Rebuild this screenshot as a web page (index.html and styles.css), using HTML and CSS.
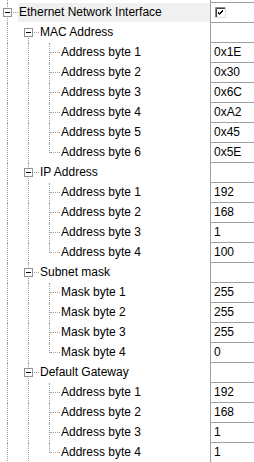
FILE: index.html
```html
<!DOCTYPE html>
<html lang="en">
<head>
    <meta charset="UTF-8">
    <title>Ethernet Network Interface</title>
    <link rel="stylesheet" href="styles.css">
</head>
<body>

    <div class="grid">
        <div class="row stub">
            <div class="name"><i class="g"></i></div>
            <div class="value"></div>
        </div>

        <div class="row">
            <div class="name"><i class="g t"><b class="box"></b></i><span class="label sel">Ethernet Network Interface</span></div>
            <div class="value">
                <svg class="check" width="11" height="11" viewBox="0 0 11 11">
                    <rect x="0" y="0" width="11" height="11" fill="#fff"/>
                    <path d="M0.5 11V0.5H11" fill="none" stroke="#8c8c8c"/>
                    <path d="M1.5 10V1.5H10" fill="none" stroke="#404040"/>
                    <path d="M0 10.5H10.5V0" fill="none" stroke="#e0e0e0"/>
                    <path d="M3 5L4.5 6.5L8 3M3 6L4.5 7.5L8 4" fill="none" stroke="#000"/>
                </svg>
            </div>
        </div>

        <!-- MAC -->
        <div class="row">
            <div class="name"><i class="g"></i><i class="g t first"><b class="box"></b></i><span class="label">MAC Address</span></div>
            <div class="value"></div>
        </div>
        <div class="row">
            <div class="name"><i class="g"></i><i class="g"></i><i class="g t"></i><span class="label">Address byte 1</span></div>
            <div class="value">0x1E</div>
        </div>
        <div class="row">
            <div class="name"><i class="g"></i><i class="g"></i><i class="g t"></i><span class="label">Address byte 2</span></div>
            <div class="value">0x30</div>
        </div>
        <div class="row">
            <div class="name"><i class="g"></i><i class="g"></i><i class="g t"></i><span class="label">Address byte 3</span></div>
            <div class="value">0x6C</div>
        </div>
        <div class="row">
            <div class="name"><i class="g"></i><i class="g"></i><i class="g t"></i><span class="label">Address byte 4</span></div>
            <div class="value">0xA2</div>
        </div>
        <div class="row">
            <div class="name"><i class="g"></i><i class="g"></i><i class="g t"></i><span class="label">Address byte 5</span></div>
            <div class="value">0x45</div>
        </div>
        <div class="row">
            <div class="name"><i class="g"></i><i class="g"></i><i class="g l"></i><span class="label">Address byte 6</span></div>
            <div class="value">0x5E</div>
        </div>

        <!-- IP -->
        <div class="row">
            <div class="name"><i class="g"></i><i class="g t"><b class="box"></b></i><span class="label">IP Address</span></div>
            <div class="value"></div>
        </div>
        <div class="row">
            <div class="name"><i class="g"></i><i class="g"></i><i class="g t"></i><span class="label">Address byte 1</span></div>
            <div class="value">192</div>
        </div>
        <div class="row">
            <div class="name"><i class="g"></i><i class="g"></i><i class="g t"></i><span class="label">Address byte 2</span></div>
            <div class="value">168</div>
        </div>
        <div class="row">
            <div class="name"><i class="g"></i><i class="g"></i><i class="g t"></i><span class="label">Address byte 3</span></div>
            <div class="value">1</div>
        </div>
        <div class="row">
            <div class="name"><i class="g"></i><i class="g"></i><i class="g l"></i><span class="label">Address byte 4</span></div>
            <div class="value">100</div>
        </div>

        <!-- Subnet -->
        <div class="row">
            <div class="name"><i class="g"></i><i class="g t"><b class="box"></b></i><span class="label">Subnet mask</span></div>
            <div class="value"></div>
        </div>
        <div class="row">
            <div class="name"><i class="g"></i><i class="g"></i><i class="g t"></i><span class="label">Mask byte 1</span></div>
            <div class="value">255</div>
        </div>
        <div class="row">
            <div class="name"><i class="g"></i><i class="g"></i><i class="g t"></i><span class="label">Mask byte 2</span></div>
            <div class="value">255</div>
        </div>
        <div class="row">
            <div class="name"><i class="g"></i><i class="g"></i><i class="g t"></i><span class="label">Mask byte 3</span></div>
            <div class="value">255</div>
        </div>
        <div class="row">
            <div class="name"><i class="g"></i><i class="g"></i><i class="g l"></i><span class="label">Mask byte 4</span></div>
            <div class="value">0</div>
        </div>

        <!-- Gateway -->
        <div class="row">
            <div class="name"><i class="g"></i><i class="g t"><b class="box"></b></i><span class="label">Default Gateway</span></div>
            <div class="value"></div>
        </div>
        <div class="row">
            <div class="name"><i class="g"></i><i class="g"></i><i class="g t"></i><span class="label">Address byte 1</span></div>
            <div class="value">192</div>
        </div>
        <div class="row">
            <div class="name"><i class="g"></i><i class="g"></i><i class="g t"></i><span class="label">Address byte 2</span></div>
            <div class="value">168</div>
        </div>
        <div class="row">
            <div class="name"><i class="g"></i><i class="g"></i><i class="g t"></i><span class="label">Address byte 3</span></div>
            <div class="value">1</div>
        </div>
        <div class="row">
            <div class="name"><i class="g"></i><i class="g"></i><i class="g l"></i><span class="label">Address byte 4</span></div>
            <div class="value">1</div>
        </div>
    </div>

</body>
</html>
```

FILE: styles.css
```css
body {
    margin: 0;
    font-family: "Liberation Sans", Arial, sans-serif;
    font-size: 12px;
    color: #000;
    background-color: #fff;
}

.grid {
    width: 254px;
    overflow: hidden;
}

.row {
    display: flex;
    height: 20px;
}

.row.stub {
    height: 3px;
}

.name {
    width: 210px;
    flex: none;
    display: flex;
    border-right: 1px solid #a0a0a0;
}

.value {
    flex: 1;
    min-width: 0;
    height: 19px;
    line-height: 19px;
    padding-left: 3px;
    border-bottom: 1px solid #a0a0a0;
    display: flex;
    align-items: center;
    white-space: nowrap;
}

.stub .value {
    height: 2px;
}

/* tree guides */
.g {
    width: 21px;
    flex: none;
    position: relative;
}

.g::before {
    content: "";
    position: absolute;
    left: 7px;
    top: 0;
    bottom: 0;
    border-left: 1px dotted #a0a0a0;
}

.g.first::before {
    top: 6px;
}

.g.t,
.g.l {
    width: 18px;
}

.g.t::after,
.g.l::after {
    content: "";
    position: absolute;
    left: 8px;
    width: 10px;
    top: 9px;
    border-top: 1px dotted #a0a0a0;
}

.g.l::before {
    bottom: 10px;
}

.box {
    position: absolute;
    left: 3px;
    top: 5px;
    width: 7px;
    height: 7px;
    border: 1px solid #919191;
    background-color: #fff;
    z-index: 1;
}

.box::after {
    content: "";
    position: absolute;
    left: 1px;
    top: 3px;
    width: 5px;
    height: 1px;
    background-color: #000;
}

.label {
    height: 19px;
    line-height: 19px;
    padding-left: 1px;
    white-space: nowrap;
}

.label.sel {
    flex: 1;
    background-color: #f0f0f0;
}

.check {
    display: block;
    margin-top: -1px;
    margin-left: 1px;
}
```
